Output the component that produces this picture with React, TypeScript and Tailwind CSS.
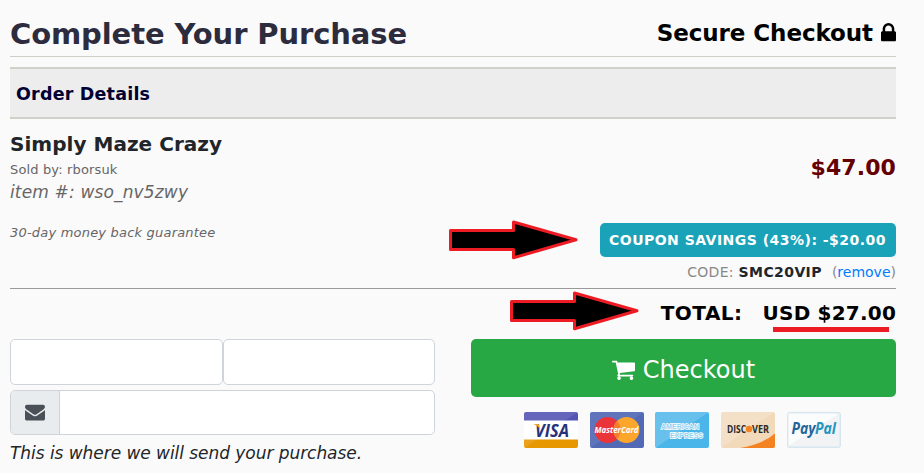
import type { ReactNode } from "react";

// Glyphs are drawn y-up on a 1792 unit em, so they are flipped here
function Glyph({ d, width, className }: { d: string; width: number; className: string }) {
    return (
        <svg viewBox={`0 -1536 ${width} 1792`} className={className} fill="currentColor" aria-hidden="true">
            <path transform="scale(1 -1)" d={d} />
        </svg>
    );
}

const lockPath = "M320 768h512v192q0 106-75 181t-181 75-181-75-75-181V768zM1152 672V96q0-40-28-68t-68-28H96Q56 0 28 28T0 96v576q0 40 28 68t68 28h32v192q0 184 132 316t316 132 316-132 132-316V768h32q40 0 68-28t28-68z";
const cartPath = "M640 0q0-52-38-90t-90-38-90 38-38 90 38 90 90 38 90-38 38-90zM1536 0q0-52-38-90t-90-38-90 38-38 90 38 90 90 38 90-38 38-90zM1664 1088V576q0-24-16-42.500T1607 512L563 390q13-60 13-70 0-16-24-64h920q26 0 45-19t19-45-19-45-45-19H448q-26 0-45 19t-19 45q0 11 8 31.500t16 36 21.500 40T445 329L268 1152H64q-26 0-45 19T0 1216t19 45 45 19h256q16 0 28.500-6.500T368 1258t13-24.500 8-26 5.500-29.500 4.500-26h1201q26 0 45-19t19-45z";
const envelopePath = "M1792 826V32q0-66-47-113t-113-47H160q-66 0-113 47T0 32v794q44-49 101-87 362-246 497-345 57-42 92.500-65.500t94.500-48 110-24.500h2q51 0 110 24.500t94.500 48 92.500 65.500q170 123 498 345 57 39 100 87zM1792 1120q0-79-49-151t-122-123q-376-261-468-325-10-7-42.500-31t-54-38.500-52-32.500-57.500-27-50-9h-2q-23 0-50 9t-57.500 27-52 32.500-54 38.500-42.500 31q-91 64-262 182.500T171 846q-62 42-117 115.500T0 1098q0 78 41.500 130T160 1280h1472q65 0 112.500-47t47.500-113z";

function Arrow({ className }: { className: string }) {
    return (
        <svg viewBox="0 0 130 40" className={className} aria-hidden="true">
            <path d="M1.500 10.500H64.500V2L127 19.800L64.500 37.800V29.500H1.500Z" fill="#000" stroke="#ed1c24" strokeWidth="3" strokeLinejoin="round" />
        </svg>
    );
}

function Card({ name, children }: { name: string; children: ReactNode }) {
    return (
        <svg viewBox="0 0 54 36" className="h-9 w-[54px] rounded-[2px]" role="img" aria-label={name}>
            {children}
        </svg>
    );
}

function PaymentCards() {
    return (
        <div className="mt-[14.500px] flex gap-[11.700px] pl-[53px]">
            <Card name="Visa">
                <rect width="54" height="36" fill="#fff" />
                <rect width="54" height="8.500" fill="#5354b4" />
                <rect y="27.500" width="54" height="8.500" fill="#e79800" />
                <path d="M0 0H54L0 36Z" fill="#fff" opacity=".1" />
                <text x="11" y="24.500" textLength="34" lengthAdjust="spacingAndGlyphs" fontFamily="Open Sans, sans-serif" fontSize="17" fontWeight="700" fontStyle="italic" fill="#26337a">VISA</text>
                <path d="M9.500 12h5l2 6q-2-4-7-6Z" fill="#eda51c" />
            </Card>
            <Card name="MasterCard">
                <rect width="54" height="36" fill="#5269b5" />
                <path d="M0 0H54L0 36Z" fill="#fff" opacity=".08" />
                <circle cx="17.500" cy="18" r="13" fill="#eb3439" />
                <circle cx="36.500" cy="18" r="13" fill="#fca62b" />
                <path d="M27 9.100a13 13 0 0 1 0 17.800a13 13 0 0 1 0-17.800Z" fill="#f47c30" />
                <text x="4.500" y="20.500" textLength="44" lengthAdjust="spacingAndGlyphs" fontFamily="Open Sans, sans-serif" fontSize="9" fontWeight="700" fontStyle="italic" fill="#fff">MasterCard</text>
            </Card>
            <Card name="American Express">
                <rect width="54" height="36" fill="#4ab5e8" />
                <path d="M0 0H54L0 36Z" fill="#fff" opacity=".17" />
                <g fontFamily="Liberation Sans, sans-serif" fontWeight="700" fill="#8fd2f2" stroke="#fff" strokeWidth="1.400" paintOrder="stroke">
                    <text x="6" y="16.500" fontSize="7.500" textLength="38" lengthAdjust="spacingAndGlyphs">AMERICAN</text>
                    <text x="15" y="25.500" fontSize="7.500" textLength="33" lengthAdjust="spacingAndGlyphs">EXPRESS</text>
                </g>
            </Card>
            <Card name="Discover">
                <rect width="54" height="36" fill="#f1d9b9" />
                <path d="M0 0H54L0 36Z" fill="#fff" opacity=".2" />
                <path d="M54 21.500V36H19Q42 32 54 21.500Z" fill="#f58220" />
                <g fontFamily="Open Sans, sans-serif" fontSize="10" fontWeight="700" fill="#29292b">
                    <text x="6" y="20.500" textLength="19" lengthAdjust="spacingAndGlyphs">DISC</text>
                    <text x="31" y="20.500" textLength="17" lengthAdjust="spacingAndGlyphs">VER</text>
                </g>
                <circle cx="28" cy="17" r="3.200" fill="#f58220" />
            </Card>
            <Card name="PayPal">
                <rect x=".75" y=".75" width="52.500" height="34.500" rx="1.500" fill="#f1f3f4" stroke="#d6e7ef" strokeWidth="1.500" />
                <path d="M1.500 1.500H52L1.500 34Z" fill="#fff" opacity=".7" />
                <g fontFamily="Open Sans, sans-serif" fontSize="15.500" fontWeight="700" fontStyle="italic">
                    <text x="4.500" y="22" textLength="24" lengthAdjust="spacingAndGlyphs" fill="#21659b">Pay</text>
                    <text x="28" y="22" textLength="21" lengthAdjust="spacingAndGlyphs" fill="#2595bf">Pal</text>
                </g>
            </Card>
        </div>
    );
}

export default function App() {
    return (
        <main className="relative h-[473px] w-[924px] overflow-hidden bg-[#fafafa] pr-7 pl-2.5 font-['DejaVu_Sans',sans-serif] whitespace-nowrap text-[#212529]">
            <header className="flex h-[57px] items-start justify-between border-b border-[#cfcfc8]">
                <h1 className="pt-3.5 text-[29px] leading-10 font-bold tracking-[-0.1px] text-[#2c2c3e]">Complete Your Purchase</h1>
                <p className="flex items-center pt-[13px] text-[23px] leading-10 font-bold tracking-[-0.08px] text-black">
                    Secure Checkout
                    <Glyph d={lockPath} width={1152} className="ml-2 h-6 w-[15px]" />
                </p>
            </header>

            <h2 className="mt-2.5 h-[52px] border-y-2 border-[#d0d0c8] bg-[#ededed] pl-1.5 text-[17.500px] leading-[50px] font-bold tracking-[0.2px] text-[#000033]">Order Details</h2>

            <section className="flex h-[170px] justify-between border-b border-[#999]">
                <div className="pt-3">
                    <h3 className="text-xl leading-[26px] font-bold tracking-[0.03px]">Simply Maze Crazy</h3>
                    <p className="mt-1 text-[13px] leading-[18px] tracking-[0.15px] text-[#666]">Sold by: rborsuk</p>
                    <p className="mt-px text-[17px] leading-6 tracking-[0.15px] text-[#666] italic">item #: wso_nv5zwy</p>
                    <p className="mt-5 text-[13px] leading-[18px] tracking-[0.2px] text-[#666] italic">30-day money back guarantee</p>
                </div>
                <div className="flex flex-col items-end">
                    <p className="mt-[34px] text-[22px] leading-[30px] font-bold tracking-[0.1px] text-[#660000]">$47.00</p>
                    <p className="mt-10 h-[34px] w-[296px] rounded-[5px] bg-[#19a2b8] pl-[9px] text-sm leading-[34px] font-bold tracking-[0.48px] text-white">COUPON SAVINGS (43%): -$20.00</p>
                    <p className="mt-1 text-sm leading-[22px] text-[#888]">
                        <span className="tracking-[0.3px]">CODE: </span>
                        <b className="tracking-[0.4px] text-[#212529]">SMC20VIP</b>
                        <span className="ml-2.5">(<a className="text-[#007bff]">remove</a>)</span>
                    </p>
                </div>
            </section>

            <div className="flex h-[50px] justify-end gap-5 pt-2 text-xl leading-8 font-bold text-black">
                <span className="tracking-[0.5px]">TOTAL:</span>
                <span className="tracking-[0.2px]">USD $27.00</span>
            </div>

            <section className="flex gap-9">
                <form className="w-[425px]">
                    <div className="flex">
                        <input className="h-[46px] w-[213px] rounded-[5px] border border-[#ced4da] bg-white" aria-label="First name" />
                        <input className="h-[46px] w-[212px] rounded-[5px] border border-[#ced4da] bg-white" aria-label="Last name" />
                    </div>
                    <div className="mt-[5px] flex h-[45px] overflow-hidden rounded-[5px] border border-[#ced4da] bg-white">
                        <span className="flex w-[49px] items-center justify-center border-r border-[#ced4da] bg-[#e9ecef] pb-0.5 text-[#495057]">
                            <Glyph d={envelopePath} width={1792} className="size-5" />
                        </span>
                        <input className="min-w-0 flex-1" aria-label="Email" />
                    </div>
                    <p className="mt-1.5 text-[17px] leading-6 tracking-[-0.05px] italic">This is where we will send your purchase.</p>
                </form>
                <div className="w-[425px]">
                    <button type="button" className="flex h-[58px] w-full items-center justify-center rounded-[5px] bg-[#28a745] pt-[3px] text-2xl text-white">
                        <Glyph d={cartPath} width={1664} className="mr-2 h-[25px] w-[23px]" />
                        Checkout
                    </button>
                    <PaymentCards />
                </div>
            </section>

            {/* Callouts laid over the page */}
            <Arrow className="absolute top-[220px] left-[449px] h-10 w-[130px]" />
            <Arrow className="absolute top-[291px] left-[510px] h-10 w-[130px]" />
            <span className="absolute top-[327px] left-[773px] h-[5px] w-[116px] bg-[#ed1c24]" />
        </main>
    );
}
